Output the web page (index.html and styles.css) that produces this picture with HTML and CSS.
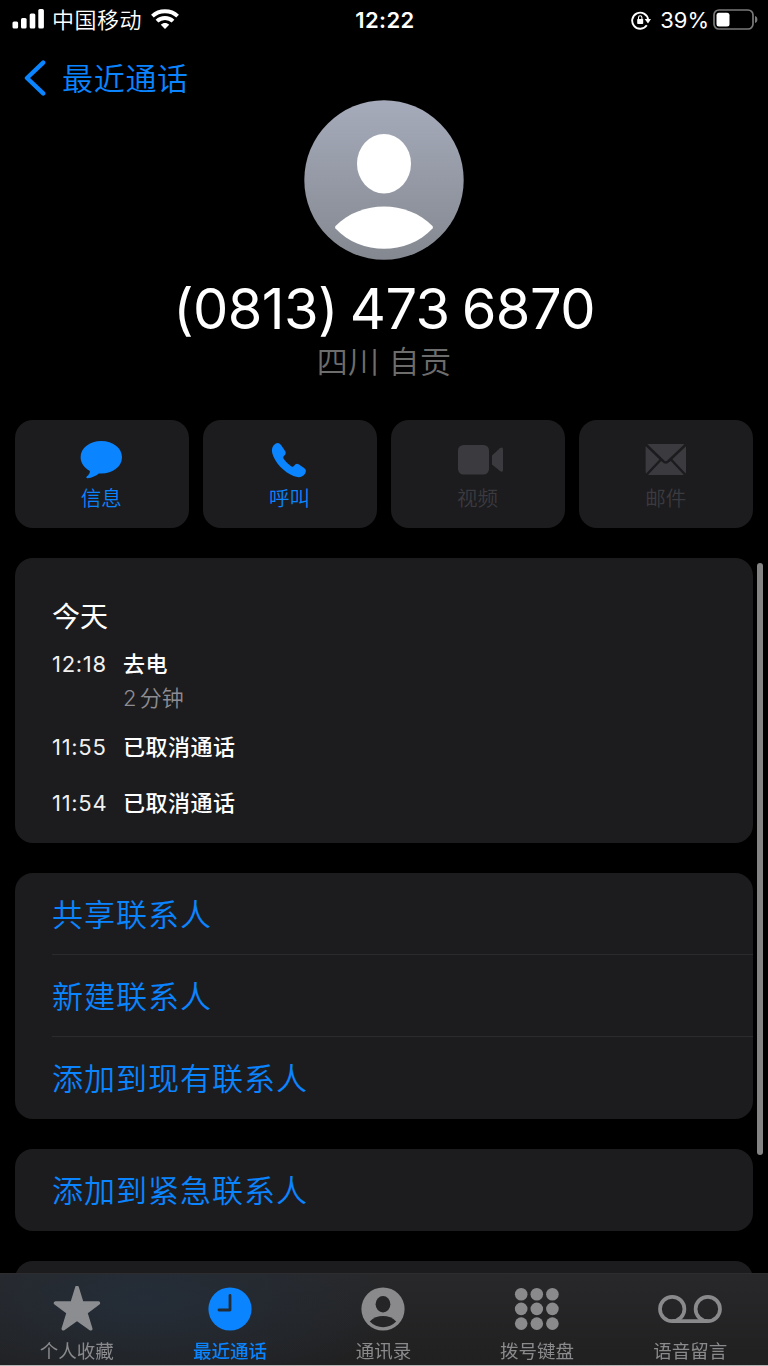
FILE: index.html
```html
<!DOCTYPE html>
<html lang="zh-CN">
<head>
    <meta charset="UTF-8">
    <meta name="viewport" content="width=device-width, initial-scale=1.0">
    <title>最近通话</title>
    <link rel="stylesheet" href="styles.css">
</head>
<body>
    <header class="status-bar">
        <div class="status-left">
            <svg class="signal" width="33" height="20" viewBox="0 0 33 20" fill="#fff">
                <rect x="0.5" y="12.5" width="5.6" height="7" rx="1.5"/>
                <rect x="9" y="9" width="5.6" height="10.5" rx="1.5"/>
                <rect x="17.7" y="4.6" width="5.6" height="14.9" rx="1.5"/>
                <rect x="26.3" y="0" width="5.6" height="19.5" rx="1.5"/>
            </svg>
            <span class="carrier">中国移动</span>
            <svg class="wifi" width="28" height="20" viewBox="0 0 28 20" fill="none" stroke="#fff" stroke-width="3.9">
                <path d="M1.4 7.2C8.3.6 19.7.6 26.6 7.2"/>
                <path d="M6 12.2C10.3 8 17.7 8 22 12.2"/>
                <path d="M9.8 15.7C12.2 13.5 15.8 13.5 18.2 15.7L14 19.9Z" fill="#fff" stroke="none"/>
            </svg>
        </div>
        <span class="clock">12:22</span>
        <div class="status-right">
            <svg width="20" height="20" viewBox="0 0 20 20" fill="none" stroke="#fff" stroke-width="1.9">
                <path d="M15.8 15.2A8 8 0 1 1 17.1 9.5"/>
                <path d="M13.6 9h6.4l-3 4.4z" fill="#fff" stroke="none"/>
                <rect x="6.2" y="8.9" width="6" height="5" rx="0.7" fill="#fff" stroke="none"/>
                <path d="M7.5 9.2V7.4a1.7 1.7 0 0 1 3.4 0V9.2" stroke-width="1.1"/>
            </svg>
            <span class="percent">39%</span>
            <svg class="battery" width="45" height="21" viewBox="0 0 45 21">
                <rect x="1" y="1" width="39" height="19" rx="5" fill="none" stroke="#7a7a7a" stroke-width="1.7"/>
                <rect x="3.5" y="3.8" width="13" height="13.6" rx="2.5" fill="#fff"/>
                <path d="M42 7c3.2.8 3.2 6.2 0 7z" fill="#7a7a7a"/>
            </svg>
        </div>
    </header>

    <nav class="nav-bar">
        <svg width="22" height="36" viewBox="0 0 22 36" fill="none" stroke="#0a84ff" stroke-width="4.4" stroke-linecap="round" stroke-linejoin="round">
            <path d="M19.2 2.6 3 18l16.2 15.4"/>
        </svg>
        <span class="nav-title">最近通话</span>
    </nav>

    <section class="profile">
        <svg class="avatar" width="160" height="160" viewBox="0 0 160 160">
            <defs>
                <linearGradient id="avatarFill" x1="0" y1="0" x2="0" y2="1">
                    <stop offset="0" stop-color="#a6abbb"/>
                    <stop offset="1" stop-color="#848890"/>
                </linearGradient>
            </defs>
            <circle cx="80" cy="80" r="79.7" fill="url(#avatarFill)"/>
            <ellipse cx="80" cy="63.7" rx="27" ry="29.7" fill="#fff"/>
            <path d="M31.5 126C57 100 103 100 128.5 126Q129.5 127.2 128.5 128.4C103 155.5 57 155.5 31.5 128.4Q30.5 127.2 31.5 126Z" fill="#fff"/>
        </svg>
        <h1 class="number">(0813) 473 6870</h1>
        <p class="region">四川 自贡</p>
    </section>

    <section class="actions">
        <div class="action">
            <svg width="46" height="42" viewBox="-0.7 0 46 42" fill="#0a84ff">
                <path d="M22.6 2C11 2 1.9 9.1 1.9 18.3c0 5.7 3.6 10.6 9.3 13.6.4 2.2-1.6 4.2-3.2 5.7-.8.9-.2 1.8.9 1.7 4.3-.4 8.5-2.5 11.3-4.8l2.4.1c11.6 0 20.7-7.1 20.7-16.3S34.2 2 22.6 2z"/>
            </svg>
            <span>信息</span>
        </div>
        <div class="action">
            <svg width="46" height="42" viewBox="0.2 0 46 42" fill="#0a84ff">
                <path d="M9.6 4.800C12 3.2 14 4.1 15.6 6.5L19.3 12C20.5 13.9 19.9 15.1 18.6 16.5C16.9 18.1 17.2 18.8 18.4 20.5C20.4 23.2 22.9 25.6 25.4 27.2C26.6 28 27.2 27.9 28.3 26.7C29.8 24.8 31.2 24.1 33.2 25.4L38.3 29C40.5 30.6 40.6 32.5 39.2 34.7C36.700 38.4 32.8 39 27.7 37C18.4 33.3 8.8 23.4 6.4 14C5.5 10.1 6.5 6.9 9.6 4.8Z"/>
            </svg>
            <span>呼叫</span>
        </div>
        <div class="action disabled">
            <svg width="52" height="42" viewBox="-6 0 52 42" fill="#3b3a3f">
                <rect x="0" y="6" width="31" height="29.5" rx="5.5"/>
                <path d="M34 16.5 42 9.2Q45 7.4 45 11V30.5Q45 34 42 32L34 25.5Z"/>
            </svg>
            <span>视频</span>
        </div>
        <div class="action disabled">
            <svg width="46" height="42" viewBox="0 0 46 42">
                <rect x="2.6" y="5" width="40.4" height="31" rx="3.5" fill="#3b3a3f"/>
                <g fill="none" stroke="#1c1c1e" stroke-width="2.5">
                    <path d="M2.8 5.5 20 22Q22.8 25 25.6 22L43 5.5"/>
                    <path d="M2.8 36.5 18 20.5M43 36.5 28 20.5"/>
                </g>
            </svg>
            <span>邮件</span>
        </div>
    </section>

    <section class="card history">
        <h2 class="history-day">今天</h2>
        <div class="call">
            <span class="call-time">12:18</span>
            <div class="call-info">
                <strong>去电</strong>
                <span class="call-length">2 分钟</span>
            </div>
        </div>
        <div class="call">
            <span class="call-time">11:55</span>
            <div class="call-info"><strong>已取消通话</strong></div>
        </div>
        <div class="call">
            <span class="call-time">11:54</span>
            <div class="call-info"><strong>已取消通话</strong></div>
        </div>
    </section>

    <section class="card links">
        <div class="link">共享联系人</div>
        <div class="link">新建联系人</div>
        <div class="link">添加到现有联系人</div>
    </section>

    <section class="card links">
        <div class="link">添加到紧急联系人</div>
    </section>

    <section class="card next-card"></section>

    <div class="scrollbar"></div>

    <footer class="tab-bar">
        <div class="tab">
            <svg width="64" height="46" viewBox="0 2 64 46" fill="#8b8d90" stroke="#8b8d90" stroke-width="3.6" stroke-linejoin="round">
                <path d="M32 3.4 36.8 18.9 53.4 19.1 40.7 28.6 45.7 44.7 32 35 18.3 44.7 23.3 28.6 10.6 19.1 27.2 18.9Z"/>
            </svg>
            <span>个人收藏</span>
        </div>
        <div class="tab active">
            <svg width="64" height="46" viewBox="0 0 64 46">
                <circle cx="32" cy="23" r="21.6" fill="#0a84ff"/>
                <path d="M32 9.5V24H21" fill="none" stroke="#232b35" stroke-width="2.8" stroke-linecap="round" stroke-linejoin="round"/>
            </svg>
            <span>最近通话</span>
        </div>
        <div class="tab">
            <svg width="64" height="46" viewBox="0 0 64 46">
                <circle cx="32" cy="23" r="21.6" fill="#8a8a8c"/>
                <ellipse cx="32" cy="18.3" rx="7.4" ry="8.2" fill="#252527"/>
                <path d="M18.8 35.5C25.5 28.3 38.5 28.3 45.2 35.5C38 43 26 43 18.8 35.5Z" fill="#252527"/>
            </svg>
            <span>通讯录</span>
        </div>
        <div class="tab">
            <svg width="64" height="46" viewBox="0 0 64 46" fill="#8a8a8c">
                <circle cx="16.2" cy="8.2" r="6.3"/>
                <circle cx="31.8" cy="8.2" r="6.3"/>
                <circle cx="47.4" cy="8.2" r="6.3"/>
                <circle cx="16.2" cy="22.9" r="6.3"/>
                <circle cx="31.8" cy="22.9" r="6.3"/>
                <circle cx="47.4" cy="22.9" r="6.3"/>
                <circle cx="16.2" cy="37.6" r="6.3"/>
                <circle cx="31.8" cy="37.6" r="6.3"/>
                <circle cx="47.4" cy="37.6" r="6.3"/>
            </svg>
            <span>拨号键盘</span>
        </div>
        <div class="tab">
            <svg width="64" height="46" viewBox="0 0 64 46" fill="none" stroke="#8a8a8c" stroke-width="3.7">
                <circle cx="14.2" cy="23" r="12.2"/>
                <circle cx="49.8" cy="23" r="12.2"/>
                <path d="M14.2 35.2H49.8"/>
            </svg>
            <span>语音留言</span>
        </div>
    </footer>
</body>
</html>
```
FILE: styles.css
```css
* {
    box-sizing: border-box;
}

body {
    margin: 0;
    height: 1366px;
    overflow: hidden;
    background-color: #000000;
    color: #ffffff;
    font-family: Inter, "Noto Sans CJK SC", sans-serif;
    display: flex;
    flex-direction: column;
}

h1, h2, p {
    margin: 0;
    font-weight: 400;
}

svg {
    display: block;
    flex-shrink: 0;
}

/* Status bar */
.status-bar {
    display: grid;
    grid-template-columns: 1fr auto 1fr;
    align-items: center;
    height: 40px;
    padding: 0 10px 0 12px;
    flex-shrink: 0;
}

.status-left,
.status-right {
    display: flex;
    align-items: center;
}

.status-right {
    justify-content: flex-end;
}

.signal {
    margin-top: -2px;
}

.carrier {
    margin-left: 7px;
    font-size: 22px;
    font-weight: 350;
    letter-spacing: 0.5px;
    line-height: 40px;
}

.wifi {
    margin-left: 9px;
    margin-top: -3px;
}

.clock {
    font-size: 22px;
    font-weight: 600;
    letter-spacing: 0.4px;
}

.percent {
    margin-left: 9px;
    font-size: 22px;
}

.battery {
    margin-left: 4px;
    margin-top: -2px;
}

/* Back button */
.nav-bar {
    display: flex;
    align-items: center;
    height: 60px;
    padding: 16px 0 0 24px;
    flex-shrink: 0;
}

.nav-title {
    margin-left: 16px;
    padding-top: 2px;
    font-size: 31px;
    font-weight: 350;
    letter-spacing: 0.7px;
    line-height: 44px;
    color: #0a84ff;
}

/* Contact header */
.profile {
    display: flex;
    flex-direction: column;
    align-items: center;
    height: 320px;
    flex-shrink: 0;
}

.number {
    margin-top: 14px;
    font-size: 56px;
    font-feature-settings: "calt" 0;
    letter-spacing: -0.6px;
    word-spacing: -3px;
    line-height: 70px;
    white-space: nowrap;
}

.region {
    padding-top: 1px;
    font-size: 31px;
    font-weight: 350;
    letter-spacing: 0.4px;
    line-height: 34px;
    color: #6d6d6d;
}

/* Action buttons */
.actions {
    display: grid;
    grid-template-columns: repeat(4, 1fr);
    gap: 14.5px;
    height: 108px;
    margin: 0 15px;
    flex-shrink: 0;
}

.action {
    display: flex;
    flex-direction: column;
    align-items: center;
    padding-top: 19px;
    padding-right: 1px;
    border-radius: 18px;
    background-color: #1c1c1e;
    color: #0a84ff;
    font-size: 20.5px;
    font-weight: 350;
    line-height: 36px;
}

.action.disabled {
    color: #3b3a3f;
}

/* Cards */
.card {
    margin: 30px 15px 0;
    border-radius: 18px;
    background-color: #1c1c1e;
    flex-shrink: 0;
}

.history {
    height: 285px;
    padding: 38px 37px 0;
}

.history-day {
    font-size: 28px;
    line-height: 42px;
    margin-bottom: 9px;
}

.call {
    display: flex;
    font-size: 22px;
    line-height: 34px;
    margin-bottom: 22px;
}

.call:nth-child(2) {
    margin-bottom: 15px;
}

.call-time {
    width: 71px;
    font-feature-settings: "calt" 0;
    letter-spacing: 0.7px;
    color: #f0f0f0;
}

.call-info {
    display: flex;
    flex-direction: column;
    letter-spacing: 0.5px;
}

.call-info strong {
    font-weight: 500;
}

.call-length {
    font-weight: 350;
    letter-spacing: 0;
    word-spacing: -3px;
    color: #8d8c93;
}

.links {
    padding-left: 37px;
}

.link {
    height: 82px;
    font-size: 31px;
    font-weight: 350;
    letter-spacing: 1px;
    line-height: 83px;
    color: #0a84ff;
}

.link:not(:last-child) {
    border-bottom: 1px solid #2b2b2e;
}

.next-card {
    height: 120px;
}

.scrollbar {
    position: fixed;
    top: 563px;
    right: 5px;
    width: 6px;
    height: 592px;
    border-radius: 3px;
    background-color: #848484;
}

/* Tab bar */
.tab-bar {
    position: fixed;
    left: 0;
    right: 0;
    bottom: 0;
    display: grid;
    grid-template-columns: repeat(5, 1fr);
    height: 93px;
    padding-right: 1px;
    border-top: 1px solid #2d2d2f;
    border-bottom: 1px solid #b5b5b5;
    background: radial-gradient(ellipse 250px 100px at 145px 24px, #242d38, rgba(36, 45, 56, 0)), linear-gradient(#28282a, #202021);
}

.tab {
    display: flex;
    flex-direction: column;
    align-items: center;
    padding-top: 12px;
    font-size: 18.5px;
    line-height: 38px;
    color: #8a8a8c;
}

.tab.active {
    font-weight: 500;
    color: #0a84ff;
}
```
